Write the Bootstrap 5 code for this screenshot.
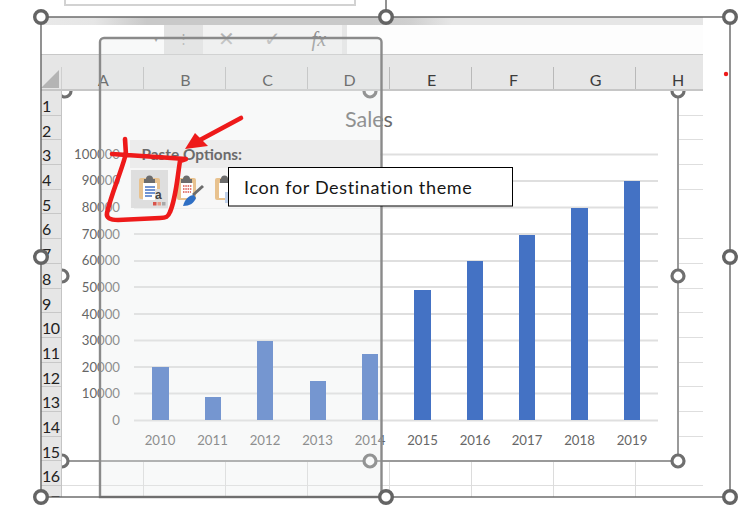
<!DOCTYPE html>
<html lang="en">
<head>
<meta charset="utf-8">
<title>Paste Options</title>
<link href="https://cdn.jsdelivr.net/npm/bootstrap@5.3.0/dist/css/bootstrap.min.css" rel="stylesheet">
<style>
html,body{margin:0;background:#fff;overflow:hidden}
.stage{width:748px;height:523px;font-family:Lato,"Liberation Sans",sans-serif}
.frag{margin-left:64px;width:292px;height:6px;border:2px solid #d2d2d2;border-top:0}
.sheet{margin:11px 0 0 41px;width:662px;height:480px;overflow:hidden;background:#fff}
.strip{height:8px;background:linear-gradient(90deg,#e9e9e9 0,#e6e6e6 8%,#c9c9c9 16%,#c9c9c9 50%,#d0d0d0 56%,#e6e6e6 62%,#e6e6e6 100%)}
.fbar{height:29px;background:#fdfdfd}
.nbox{width:123px;background:#fff;color:#8a8a8a;font-size:8px;line-height:29px;padding-right:6px}
.grip{width:39px;background:#e2e2e2;color:#a8a8a8;font-size:13px;line-height:26px}
.fx{width:139px;background:#f3f3f3;color:#b5b5b5;font-size:20px;line-height:27px}
.fx span{flex:1 1 0;text-align:center}
.fx i{font-family:"Liberation Serif",serif;color:#8d8d8d}
.fill{width:5px;background:#e6e6e6}
.fin{flex:1 1 auto}
.hgap{height:13px;background:#e6e6e6;border-top:1px solid #c8c8c8}
.hrow{height:24px;background:#e6e6e6;border-bottom:2px solid #c6c6c6;color:#3c3c3c;font-size:16px;line-height:26px}
.corner{width:21px;flex:none;border-right:1px solid #cfcfcf;position:relative;overflow:hidden}
.corner::after{content:"";position:absolute;right:2px;bottom:1px;border-style:solid;border-width:0 0 18px 18px;border-color:transparent transparent #b4b4b4 transparent}
.hcell{width:82px;flex:none;border-right:1px solid #b9b9b9;text-align:center;padding-left:2px}
.hlast{width:67px;flex:none;text-align:center;padding-left:17px;white-space:nowrap}
.body{flex:1 1 auto;min-height:0}
.rhead{width:21px;flex:none;background:#e6e6e6;border-right:1px solid #c4c4c4;overflow:hidden}
.rcell{height:24.7px;flex:none;border-bottom:1px solid #c8c8c8;font-size:16px;letter-spacing:-.5px;line-height:29px;color:#222;padding-left:1px;white-space:nowrap;overflow:hidden}
.cells{flex:1 1 auto;background-image:repeating-linear-gradient(90deg,transparent 0,transparent 81px,#dcdcdc 81px,#dcdcdc 82px),repeating-linear-gradient(180deg,transparent 0,transparent 23.7px,#dedede 23.7px,#dedede 24.7px)}
.over{left:0;top:0;width:748px;height:523px}
.t-ax{font-family:Lato,sans-serif;font-size:13.2px;fill:#666}
.t-title{font-family:Lato,sans-serif;font-size:21.5px;fill:#6a6a6a}
.t-paste{font-family:Lato,sans-serif;font-size:15.4px;font-weight:700;fill:#6b6b6b}
.t-tip{font-family:Lato,sans-serif;font-size:18px;letter-spacing:.65px;fill:#161616}
.t-a{font-family:"Liberation Sans",sans-serif;font-size:12px;font-weight:700;fill:#444}
.ln{stroke:#dfdfdf;stroke-width:2;fill:none}
.bar{fill:#4472c4}
.h1{fill:#fff;stroke:#646464;stroke-width:3.4}
.h2{fill:#fff;stroke:#6f6f6f;stroke-width:3.2}
.ink{fill:none;stroke:#ee1a1a;stroke-width:4.6;stroke-linecap:round;stroke-linejoin:round}
</style>
</head>
<body>
<div class="stage position-relative">
  <div class="frag"></div>
  <div class="sheet d-flex flex-column">
    <div class="strip flex-shrink-0"></div>
    <div class="fbar d-flex flex-shrink-0">
      <div class="nbox text-end">&#9662;</div>
      <div class="grip text-center">&#8942;</div>
      <div class="fx d-flex"><span>&#10005;</span><span>&#10003;</span><span><i>fx</i></span></div>
      <div class="fill"></div>
      <div class="fin"></div>
    </div>
    <div class="hgap flex-shrink-0"></div>
    <div class="hrow d-flex flex-shrink-0">
      <div class="corner"></div>
      <div class="hcell">A</div><div class="hcell">B</div><div class="hcell">C</div><div class="hcell">D</div>
      <div class="hcell">E</div><div class="hcell">F</div><div class="hcell">G</div>
      <div class="hlast">H</div>
    </div>
    <div class="body d-flex">
      <div class="rhead d-flex flex-column">
        <div class="rcell">1</div><div class="rcell">2</div><div class="rcell">3</div><div class="rcell">4</div>
        <div class="rcell">5</div><div class="rcell">6</div><div class="rcell">7</div><div class="rcell">8</div>
        <div class="rcell">9</div><div class="rcell">10</div><div class="rcell">11</div><div class="rcell">12</div>
        <div class="rcell">13</div><div class="rcell">14</div><div class="rcell">15</div><div class="rcell">16</div>
        <div class="rcell">17</div>
      </div>
      <div class="cells"></div>
    </div>
  </div>

  <svg class="over position-absolute" viewBox="0 0 748 523" xmlns="http://www.w3.org/2000/svg">
    <defs><clipPath id="sheetclip"><rect x="62" y="91" width="686" height="432"/></clipPath></defs>
    <!-- chart -->
    <rect x="62" y="91" width="616" height="370" fill="#fff"/>
    <path d="M62 461H678V91" fill="none" stroke="#9a9a9a" stroke-width="2"/>
    <g class="grid">
      <path class="ln" d="M134 420.5H658M134 393.5H658M134 367H658M134 340.5H658M134 314H658M134 287H658M134 261H658M134 234H658M134 207.5H658M134 181H658M134 154.5H658"/>
    </g>
    <rect class="bar" x="152" y="367" width="17" height="53"/>
    <rect class="bar" x="205" y="397" width="16" height="23"/>
    <rect class="bar" x="257" y="341" width="16" height="79"/>
    <rect class="bar" x="310" y="381" width="16" height="39"/>
    <rect class="bar" x="362" y="354" width="16" height="66"/>
    <rect class="bar" x="414" y="290" width="17" height="130"/>
    <rect class="bar" x="467" y="261" width="16" height="159"/>
    <rect class="bar" x="519" y="235" width="16" height="185"/>
    <rect class="bar" x="571" y="208" width="17" height="212"/>
    <rect class="bar" x="624" y="181" width="16" height="239"/>
    <text class="t-title" x="345" y="127">Sales</text>
    <g class="t-ax" text-anchor="end">
      <text x="120" y="425">0</text><text x="120" y="398">10000</text><text x="120" y="372">20000</text>
      <text x="120" y="345">30000</text><text x="120" y="319">40000</text><text x="120" y="292">50000</text>
      <text x="120" y="265">60000</text><text x="120" y="239">70000</text><text x="120" y="212">80000</text>
      <text x="120" y="185">90000</text><text x="120" y="159">100000</text>
    </g>
    <g class="t-ax" text-anchor="middle">
      <text x="160" y="445">2010</text><text x="212.500" y="445">2011</text><text x="265" y="445">2012</text>
      <text x="317.500" y="445">2013</text><text x="370" y="445">2014</text><text x="422.500" y="445">2015</text>
      <text x="475" y="445">2016</text><text x="527" y="445">2017</text><text x="579.500" y="445">2018</text>
      <text x="632" y="445">2019</text>
    </g>
    <g clip-path="url(#sheetclip)">
      <circle class="h2" cx="65" cy="91" r="6"/><circle class="h2" cx="370" cy="91" r="6"/><circle class="h2" cx="678" cy="91" r="6"/>
      <circle class="h2" cx="62" cy="276" r="6"/><circle class="h2" cx="678" cy="276" r="6"/>
      <circle class="h2" cx="62" cy="461" r="6"/><circle class="h2" cx="370" cy="461" r="6"/><circle class="h2" cx="678" cy="461" r="6"/>
    </g>
    <!-- translucent pane -->
    <path d="M100 497V42a4 4 0 0 1 4-4H377.500a4 4 0 0 1 4 4V497Z" fill="#e8ecec" fill-opacity=".3" stroke="#8a8a8a" stroke-width="2.400"/>
    <!-- paste options -->
    <rect x="130" y="140" width="250" height="28" fill="#ececec"/>
    <rect x="130" y="168" width="250" height="40" fill="#f7f7f7"/>
    <rect x="131" y="170" width="37" height="38" fill="#dedede"/>
    <text class="t-paste" x="141.500" y="160">Paste Options:</text>
    <!-- keep source icon a -->
    <g>
      <rect x="139" y="178" width="21" height="21" rx="2" fill="#e8c28f"/>
      <rect x="143" y="183" width="14" height="17" fill="#fff"/>
      <path d="M146 179a3 3 0 0 1 7 0h2v4h-11v-4Z" fill="#6c6c6c"/>
      <path d="M145 187h10M145 190h10M145 193h10M145 196h7" stroke="#4472c4" stroke-width="1.300"/>
      <rect x="155" y="189" width="11" height="12" fill="#dedede"/>
      <text class="t-a" x="155" y="199">a</text>
      <rect x="153" y="202" width="3.500" height="3.500" fill="#d9534a"/>
      <rect x="157.500" y="202" width="3.500" height="3.500" fill="#e59a86"/>
      <rect x="162" y="202" width="3.500" height="3.500" fill="#a8a8a8"/>
    </g>
    <!-- icon b -->
    <g>
      <rect x="177" y="178" width="19" height="22" rx="2" fill="#e8c28f"/>
      <rect x="181" y="183" width="12" height="15" fill="#fff"/>
      <path d="M183 179a3 3 0 0 1 7 0h2v4h-11v-4Z" fill="#6c6c6c"/>
      <path d="M183 186h9M183 189h9M183 192h8" stroke="#d9534a" stroke-width="1.500" stroke-dasharray="1.500 .8"/>
      <path d="M193 195L203 186" stroke="#6c6c6c" stroke-width="3"/>
      <path d="M183 206c2-7 6-11 11-11l2 3c-2 5-6 8-13 8Z" fill="#2f6fc4"/>
    </g>
    <!-- icon c -->
    <g>
      <rect x="215" y="178" width="14" height="22" rx="2" fill="#e8c28f"/>
      <rect x="219" y="183" width="10" height="15" fill="#fff"/>
      <path d="M221 179a3 3 0 0 1 7 0h1v4h-9v-4Z" fill="#6c6c6c"/>
      <rect x="225" y="192" width="4" height="11" fill="#bfd0ea"/>
    </g>
    <!-- tooltip -->
    <rect x="228.500" y="167.500" width="284" height="38.500" fill="#fff" stroke="#000" stroke-width="1"/>
    <text class="t-tip" x="244" y="194">Icon for Destination theme</text>
    <!-- hand-drawn ink -->
    <path class="ink" d="M125 139L126 155M112 154L186 159L180 161C177 180 176 198 170 212C168 217 166 218 160 218L118 220C110 220 106 218 107 213C111 195 120 175 125 157"/>
    <path class="ink" stroke-width="5.500" stroke-linecap="butt" d="M241 118L200 140"/>
    <path d="M185 149L195 133L208 146Z" fill="#ee1a1a"/>
    <!-- outer selection -->
    <path d="M386 0V17" stroke="#646464" stroke-width="1.400"/>
    <rect x="41" y="17" width="689" height="480" fill="none" stroke="#646464" stroke-width="1.400"/>
    <circle class="h1" cx="41" cy="17" r="6.300"/><circle class="h1" cx="386" cy="17" r="6.300"/><circle class="h1" cx="730" cy="17" r="6.300"/>
    <circle class="h1" cx="41" cy="257" r="6.300"/><circle class="h1" cx="730" cy="257" r="6.300"/>
    <circle class="h1" cx="41" cy="497" r="6.300"/><circle class="h1" cx="386" cy="497" r="6.300"/><circle class="h1" cx="730" cy="497" r="6.300"/>
    <circle cx="726" cy="74" r="2.200" fill="#ee1a1a"/>
  </svg>
</div>
<script src="https://cdn.jsdelivr.net/npm/bootstrap@5.3.0/dist/js/bootstrap.bundle.min.js"></script>
</body>
</html>
